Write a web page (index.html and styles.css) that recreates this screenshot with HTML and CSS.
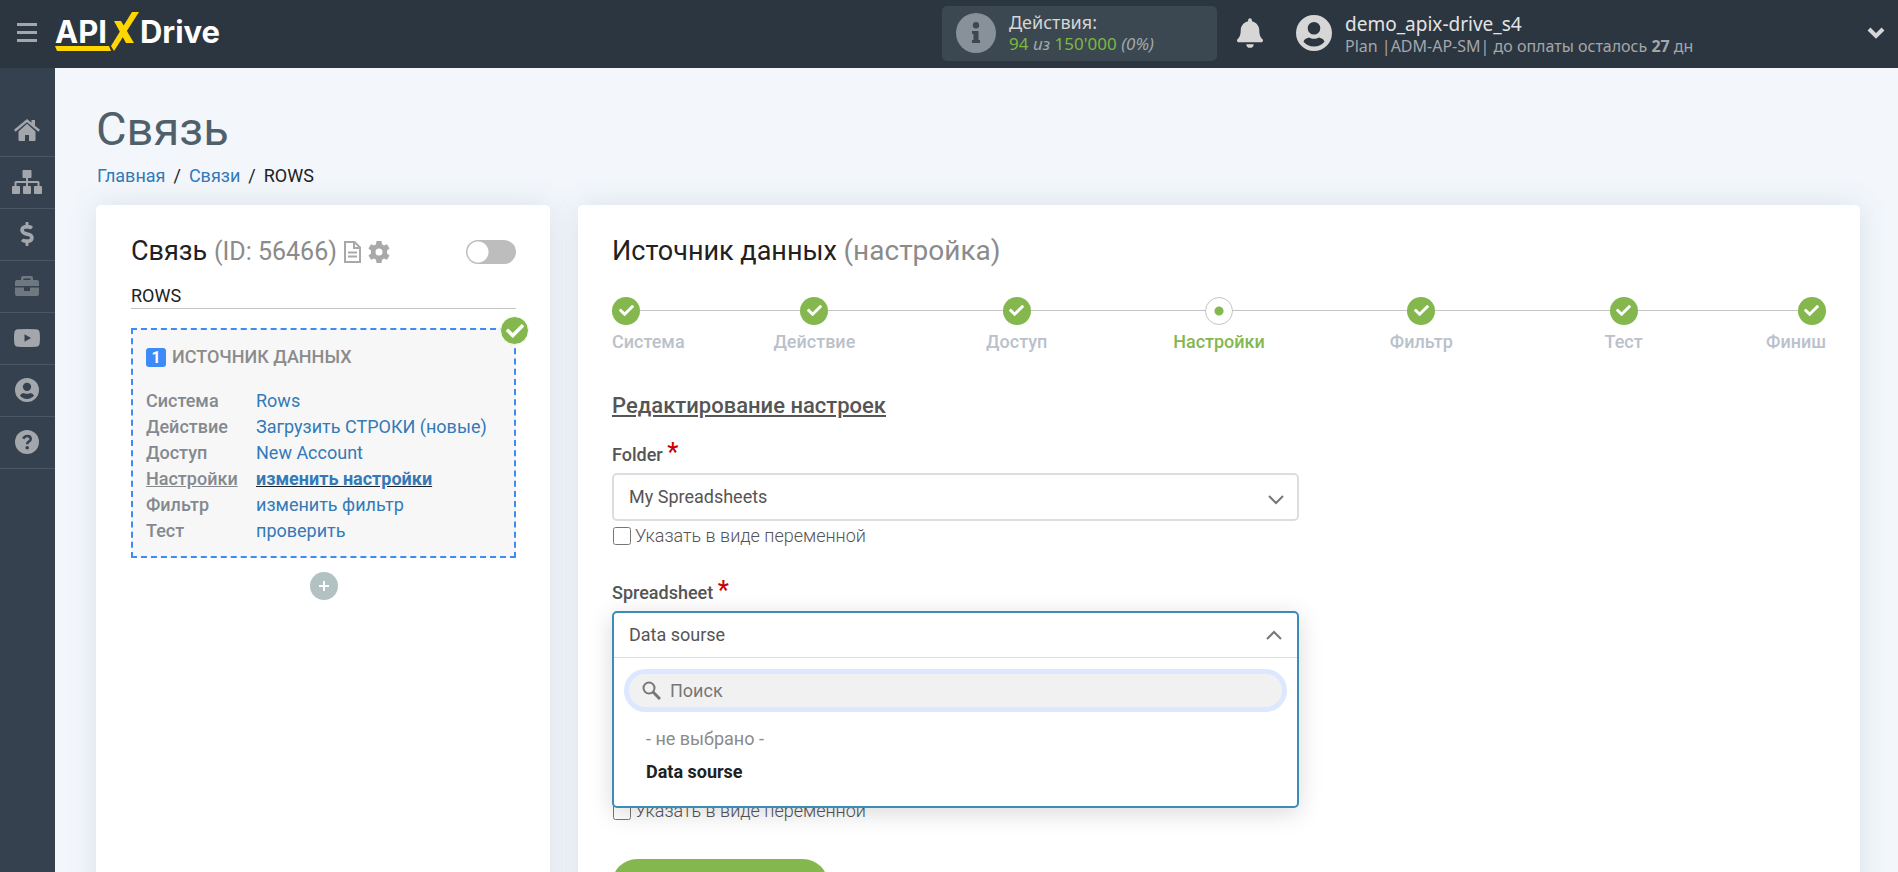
FILE: index.html
```html
<!DOCTYPE html>
<html lang="ru">
<head>
    <meta charset="UTF-8">
    <meta name="viewport" content="width=device-width, initial-scale=1.0">
    <title>Связь - ROWS</title>
    <link rel="stylesheet" href="styles.css">
</head>
<body>

    <!-- Shared icons -->
    <svg class="sprite" aria-hidden="true">
        <symbol id="icon-user" viewBox="0 0 36 36">
            <path fill-rule="evenodd" d="M18 0a18 18 0 1 1 0 36a18 18 0 1 1 0-36zM18 7a6.300 6.300 0 1 0 0 12.600a6.300 6.300 0 1 0 0-12.600zM13 22.500c-3 .6-5 2.300-5.500 4.300c2.500 3 6 4.700 10.500 4.700s8-1.700 10.500-4.700c-.5-2-2.500-3.700-5.500-4.300c-1.500.8-3.200 1.300-5 1.300s-3.500-.5-5-1.300z"/>
        </symbol>
        <symbol id="icon-check" viewBox="0 0 512 512">
            <path d="M173.898 439.404l-166.400-166.400c-9.997-9.997-9.997-26.206 0-36.204l36.203-36.204c9.997-9.998 26.207-9.998 36.204 0L192 312.690 432.095 72.596c9.997-9.997 26.207-9.997 36.204 0l36.203 36.204c9.997 9.997 9.997 26.206 0 36.204l-294.400 294.401c-9.998 9.997-26.207 9.997-36.204-.001z"/>
        </symbol>
    </svg>

    <header class="header">
        <button class="menu-btn" type="button" aria-label="Меню">
            <svg width="20" height="19" viewBox="0 0 20 19"><path d="M0 0h20v3H0zM0 8h20v3H0zM0 16h20v3H0z"/></svg>
        </button>
        <a class="logo" href="#">
            <span>API</span>
            <svg class="logo-x" width="32" height="40" viewBox="0 0 32 40">
                <path d="M24 0h7L6 39l-3-5z"/>
                <path d="M6 9h7l13 22h-8z"/>
            </svg>
            <span>Drive</span>
            <svg class="logo-line" width="57" height="5" viewBox="0 0 57 5"><path d="M0 0h54l2 5H2z"/></svg>
        </a>

        <div class="actions">
            <svg width="40" height="40" viewBox="0 0 40 40">
                <circle cx="20" cy="20" r="20" fill="#88919a"/>
                <path d="M20 9a3.200 3.200 0 1 1 0 6.400a3.200 3.200 0 1 1 0-6.400zM16 18h6.500v9H24v3h-8v-3h1.500v-6H16z" fill="#3b4851"/>
            </svg>
            <div>
                <div class="actions-title">Действия:</div>
                <div class="actions-count"><b>94</b> <i>из</i> <b>150'000</b> <i>(0%)</i></div>
            </div>
        </div>
        <button class="bell" type="button" aria-label="Уведомления">
            <svg width="26" height="30" viewBox="0 0 448 512"><path d="M224 512c35.320 0 63.970-28.650 63.970-64H160.030c0 35.350 28.650 64 63.970 64zm215.390-149.710c-19.320-20.760-55.470-51.990-55.470-154.290 0-77.700-54.480-139.900-127.940-155.160V32c0-17.670-14.320-32-31.980-32s-31.980 14.330-31.980 32v20.840C118.560 68.100 64.080 130.300 64.080 208c0 102.300-36.150 133.530-55.470 154.290-6 6.450-8.660 14.160-8.610 21.710.11 16.400 12.980 32 32.100 32h383.800c19.120 0 32-15.600 32.100-32 .05-7.550-2.610-15.270-8.610-21.710z"/></svg>
        </button>
        <div class="user">
            <svg width="36" height="36"><use href="#icon-user"/></svg>
            <div class="user-text">
                <div class="user-name">demo_apix-drive_s4</div>
                <div class="user-plan">Plan |ADM-AP-SM| до оплаты осталось <b>27</b> дн</div>
            </div>
        </div>
        <button class="user-toggle" type="button" aria-label="Открыть меню">
            <svg width="18" height="12" viewBox="0 0 18 12"><path d="M2 2l7 7l7-7" fill="none" stroke="#d6d6d6" stroke-width="4"/></svg>
        </button>
    </header>

    <div class="layout">
        <nav class="sidebar">
            <a href="#" aria-label="Главная">
                <svg width="26" height="22" viewBox="0 0 26 22"><path d="M13 4.800l8.500 7.600V21a1 1 0 0 1-1 1H15v-6h-4v6H5.500a1 1 0 0 1-1-1v-8.600zM0 10.800L13 0l4.500 3.700V1H21v5.700l5 4.100l-1.600 1.900L13 3.200L1.600 12.700z"/></svg>
            </a>
            <a href="#" aria-label="Связи">
                <svg width="30" height="24" viewBox="0 0 30 24"><path d="M11.500 0h7a1 1 0 0 1 1 1v6a1 1 0 0 1-1 1H16v3h10a1.500 1.500 0 0 1 1.500 1.500V16H29a1 1 0 0 1 1 1v6a1 1 0 0 1-1 1h-6a1 1 0 0 1-1-1v-6a1 1 0 0 1 1-1h2.500v-3H16v3h2a1 1 0 0 1 1 1v6a1 1 0 0 1-1 1h-6a1 1 0 0 1-1-1v-6a1 1 0 0 1 1-1h2v-3H4.500v3H7a1 1 0 0 1 1 1v6a1 1 0 0 1-1 1H1a1 1 0 0 1-1-1v-6a1 1 0 0 1 1-1h1.500v-3.500A1.500 1.500 0 0 1 4 11h10V8h-2.500a1 1 0 0 1-1-1V1a1 1 0 0 1 1-1z"/></svg>
            </a>
            <a href="#" aria-label="Оплата">
                <svg width="14" height="24" viewBox="0 0 288 512"><path d="M209.200 233.400l-108-31.600C88.700 198.200 80 186.500 80 173.500c0-16.300 13.200-29.500 29.500-29.500h66.300c12.200 0 24.200 3.700 34.200 10.500 6.100 4.100 14.300 3.100 19.500-2l34.800-34c7.100-6.900 6.100-18.400-1.800-24.500C238 74.800 207.400 64.100 176 64V16c0-8.800-7.200-16-16-16h-32c-8.800 0-16 7.200-16 16v48h-2.500C45.800 64-5.400 118.700.5 183.600c4.200 46.100 39.400 83.600 83.800 96.600l102.500 30c12.500 3.700 21.200 15.300 21.200 28.300 0 16.300-13.200 29.500-29.500 29.500h-66.300C100 368 88 364.300 78 357.500c-6.100-4.100-14.300-3.100-19.500 2l-34.800 34c-7.100 6.900-6.100 18.400 1.800 24.500 24.500 19.200 55.100 29.900 86.500 30v48c0 8.800 7.200 16 16 16h32c8.800 0 16-7.200 16-16v-48.200c46.600-.9 90.300-28.600 105.700-72.700 21.500-61.600-14.600-124.800-72.500-141.700z"/></svg>
            </a>
            <a href="#" class="muted" aria-label="Проекты">
                <svg width="24" height="20" viewBox="0 0 24 20"><path fill-rule="evenodd" d="M6 4V2a2 2 0 0 1 2-2h8a2 2 0 0 1 2 2v2h4a2 2 0 0 1 2 2v4H0V6a2 2 0 0 1 2-2zM8.500 4h7V2.500h-7zM0 11.500h9V15h6v-3.500h9V18a2 2 0 0 1-2 2H2a2 2 0 0 1-2-2z"/></svg>
            </a>
            <a href="#" aria-label="Видео">
                <svg width="26" height="18" viewBox="0 0 26 18"><path fill-rule="evenodd" d="M4 .3Q13-.3 22 .3Q25.500.5 25.700 4Q26.200 9 25.700 14Q25.500 17.500 22 17.700Q13 18.300 4 17.700Q.5 17.500.3 14Q-.3 9 .3 4Q.5.5 4 .3zM10.500 5.300v7.400l6.500-3.700z"/></svg>
            </a>
            <a href="#" aria-label="Профиль">
                <svg width="24" height="24"><use href="#icon-user"/></svg>
            </a>
            <a href="#" aria-label="Помощь">
                <svg width="24" height="24" viewBox="0 0 24 24"><circle cx="12" cy="12" r="12"/><path d="M8.300 8.800Q9.500 6 12.200 6Q15.700 6 15.700 9Q15.700 10.700 13.800 11.700Q12.200 12.500 12.200 14.300" fill="none" stroke="#36414f" stroke-width="2.600"/><circle cx="12.200" cy="17.800" r="1.800" fill="#36414f"/></svg>
            </a>
        </nav>

        <main class="main">
            <h1>Связь</h1>
            <nav class="breadcrumbs">
                <a href="#">Главная</a><span>/</span><a href="#">Связи</a><span>/</span>ROWS
            </nav>

            <div class="cards">
                <section class="card card-link">
                    <div class="link-head">
                        <h2>Связь <small>(ID: 56466)</small></h2>
                        <button class="icon-btn" type="button" aria-label="Журнал">
                            <svg width="17" height="22" viewBox="0 0 17 22" fill="none" stroke="#a9a9a9" stroke-width="2"><path d="M1 1h9.500L16 6.500V21H1zM10 1v6h6M4 11.500h9M4 15.500h9"/></svg>
                        </button>
                        <button class="icon-btn" type="button" aria-label="Настройки связи">
                            <svg width="22" height="22" viewBox="0 0 22 22" fill="#a9a9a9"><path fill-rule="evenodd" d="M8.500 0h5l.5 3.200l2 1.200l3-1.200l2.500 4.300L19 9.600v2.800l2.500 2.100l-2.500 4.300l-3-1.200l-2 1.200l-.5 3.200h-5L8 18.800l-2-1.200l-3 1.200L.5 14.500L3 12.400V9.600L.5 7.500L3 3.200l3 1.200l2-1.200zM11 7.500a3.500 3.500 0 1 0 0 7a3.500 3.500 0 1 0 0-7z"/></svg>
                        </button>
                        <input class="switch" type="checkbox" aria-label="Включить связь">
                    </div>
                    <input class="link-name" type="text" value="ROWS" aria-label="Название связи">

                    <div class="source">
                        <span class="source-done"><svg width="18" height="18"><use href="#icon-check"/></svg></span>
                        <h3><span class="num">1</span>ИСТОЧНИК ДАННЫХ</h3>
                        <dl>
                            <dt>Система</dt><dd><a href="#">Rows</a></dd>
                            <dt>Действие</dt><dd><a href="#">Загрузить СТРОКИ (новые)</a></dd>
                            <dt>Доступ</dt><dd><a href="#">New Account</a></dd>
                            <dt class="current">Настройки</dt><dd class="current"><a href="#">изменить настройки</a></dd>
                            <dt>Фильтр</dt><dd><a href="#">изменить фильтр</a></dd>
                            <dt>Тест</dt><dd><a href="#">проверить</a></dd>
                        </dl>
                    </div>
                    <button class="add" type="button" aria-label="Добавить">
                        <svg width="10" height="10" viewBox="0 0 10 10"><path d="M5 0v10M0 5h10" stroke="#fff" stroke-width="2"/></svg>
                    </button>
                </section>

                <section class="card card-setup">
                    <h2>Источник данных <small>(настройка)</small></h2>

                    <ol class="steps">
                        <li><i><svg width="15" height="15"><use href="#icon-check"/></svg></i>Система</li>
                        <li><i><svg width="15" height="15"><use href="#icon-check"/></svg></i>Действие</li>
                        <li><i><svg width="15" height="15"><use href="#icon-check"/></svg></i>Доступ</li>
                        <li class="active"><i></i>Настройки</li>
                        <li><i><svg width="15" height="15"><use href="#icon-check"/></svg></i>Фильтр</li>
                        <li><i><svg width="15" height="15"><use href="#icon-check"/></svg></i>Тест</li>
                        <li><i><svg width="15" height="15"><use href="#icon-check"/></svg></i>Финиш</li>
                    </ol>

                    <form class="form">
                        <h3>Редактирование настроек</h3>

                        <div class="field">
                            <label class="field-label" for="folder">Folder <em>*</em></label>
                            <div class="select">
                                <select id="folder">
                                    <option>My Spreadsheets</option>
                                </select>
                                <svg class="arrow" width="16" height="10" viewBox="0 0 16 10"><path d="M1 1l7 7l7-7"/></svg>
                            </div>
                            <label class="variable"><input type="checkbox">Указать в виде переменной</label>
                        </div>

                        <div class="field">
                            <label class="field-label" for="spreadsheet">Spreadsheet <em>*</em></label>
                            <div class="dropdown">
                                <button class="dropdown-value" id="spreadsheet" type="button" aria-expanded="true">
                                    Data sourse
                                    <svg class="arrow" width="16" height="10" viewBox="0 0 16 10"><path d="M1 9l7-7l7 7"/></svg>
                                </button>
                                <div class="search">
                                    <svg width="19" height="19" viewBox="0 0 19 19" fill="none" stroke="#777" stroke-width="2"><circle cx="7" cy="7" r="5.500"/><path d="M11 11l7 7" stroke-width="3"/></svg>
                                    <input type="text" placeholder="Поиск" aria-label="Поиск">
                                </div>
                                <ul role="listbox">
                                    <li role="option">- не выбрано -</li>
                                    <li role="option" class="selected" aria-selected="true">Data sourse</li>
                                </ul>
                            </div>
                            <label class="variable"><input type="checkbox">Указать в виде переменной</label>
                        </div>

                        <button class="submit" type="button" aria-label="Продолжить"></button>
                    </form>
                </section>
            </div>
        </main>
    </div>

</body>
</html>
```
FILE: styles.css
```css
* {
    box-sizing: border-box;
}

body {
    margin: 0;
    height: 100vh;
    display: flex;
    flex-direction: column;
    overflow: hidden;
    background: #f3f7fc;
    color: #212121;
    font-family: Roboto, "Liberation Sans", sans-serif;
    font-size: 18px;
    line-height: 26px;
}

h1, h2, h3, ul, ol, dl, dd {
    margin: 0;
    padding: 0;
    font-weight: 400;
    list-style: none;
}

svg {
    display: block;
    flex: none;
}

button {
    padding: 0;
    border: 0;
    background: none;
    font: inherit;
    color: inherit;
    cursor: pointer;
}

a {
    color: #337ab7;
    text-decoration: none;
}

.sprite {
    display: none;
}

/* Header */
.header {
    flex: none;
    display: flex;
    align-items: center;
    height: 68px;
    padding: 0 13px 2px 17px;
    background: #2c3641;
    font-family: "Noto Sans", "Open Sans", sans-serif;
}

.menu-btn {
    margin-right: 18px;
    padding-bottom: 2px;
    fill: #a3a7ab;
}

.logo {
    position: relative;
    display: flex;
    align-items: center;
    height: 44px;
    margin-right: auto;
    padding-bottom: 2px;
    color: #fff;
    font-family: Inter, Lato, sans-serif;
    font-size: 31px;
    font-weight: 700;
}

.logo svg {
    fill: #ffd600;
}

.logo-x {
    margin-left: 1px;
}

.logo-line {
    position: absolute;
    left: 0;
    bottom: 4px;
}

.actions {
    display: flex;
    align-items: center;
    gap: 13px;
    width: 275px;
    height: 55px;
    padding-left: 14px;
    border-radius: 5px;
    background: #3b4851;
    line-height: 22px;
}

.actions-title {
    color: #d6d6d6;
}

.actions-count {
    font-size: 17px;
    color: #a3a7ab;
}

.actions-count b {
    font-weight: 400;
    color: #7cb83f;
}

.bell {
    margin: 0 33px 0 20px;
    fill: #d6d6d6;
}

.user {
    display: flex;
    align-items: center;
    gap: 13px;
    width: 571px;
    fill: #d6d6d6;
    line-height: 22px;
    white-space: nowrap;
}

.user-text {
    padding-top: 3px;
}

.user-name {
    color: #e4e4e4;
    font-size: 19px;
}

.user-plan {
    font-size: 16px;
    color: #a3a7ab;
}

/* Sidebar */
.layout {
    flex: 1;
    display: flex;
    min-height: 0;
}

.sidebar {
    flex: none;
    width: 55px;
    padding-top: 37px;
    background: #36414f;
}

.sidebar a {
    display: flex;
    align-items: center;
    justify-content: center;
    height: 52px;
    padding: 0 1px 2px 0;
    border-bottom: 1px solid #4c5662;
    fill: #a3a7ab;
}

.sidebar .muted {
    fill: #6f7881;
}

/* Page */
.main {
    flex: 1;
    min-width: 0;
    padding: 31px 38px 0 41px;
    overflow-y: auto;
    scrollbar-width: none;
}

h1 {
    color: #4f606b;
    font-size: 47px;
    line-height: 60px;
}

.breadcrumbs {
    padding: 4px 1px 16px;
}

.breadcrumbs span {
    margin: 0 8px;
}

.cards {
    display: flex;
    gap: 28px;
}

.card {
    min-height: 800px;
    padding: 28px 34px;
    border-radius: 5px;
    background: #fff;
    box-shadow: 0 0 30px rgba(70, 90, 105, 0.14);
}

.card-link {
    flex: none;
    width: 454px;
    padding-left: 35px;
}

.card-setup {
    flex: 1;
    min-width: 0;
}

h2 {
    font-size: 27px;
    line-height: 36px;
}

h2 small {
    font-size: 28px;
    color: #8b8b8b;
}

/* Link card */
.link-head {
    display: flex;
    align-items: center;
}

.link-head small {
    font-size: 25px;
}

.icon-btn {
    margin-left: 7px;
}

.switch {
    appearance: none;
    width: 50px;
    height: 24px;
    margin: 0 0 0 auto;
    border-radius: 12px;
    background: radial-gradient(circle at 12px 12px, #fff 10px, #bdbdbd 11px);
}

.link-name {
    display: block;
    width: 100%;
    height: 26px;
    margin-top: 13px;
    padding: 0;
    border: 0;
    border-bottom: 1px solid #c4c4c4;
    background: none;
    color: #212121;
    font: inherit;
}

.source {
    position: relative;
    margin-top: 19px;
    padding: 14px 13px 12px;
    border: 2px dashed #3d8bf7;
    background: #f7f7f7;
}

.source-done {
    position: absolute;
    top: -14px;
    right: -15px;
    display: flex;
    align-items: center;
    justify-content: center;
    width: 29px;
    height: 29px;
    border: 1px solid #fff;
    border-radius: 50%;
    background: #84b84e;
    fill: #fff;
}

.source h3 {
    display: flex;
    align-items: center;
    gap: 6px;
    color: #8b8b8b;
    font-size: 18px;
    font-weight: 500;
}

.num {
    width: 20px;
    height: 19px;
    border-radius: 3px;
    background: #3d8bf7;
    color: #fff;
    font-size: 16px;
    font-weight: 700;
    line-height: 19px;
    text-align: center;
}

.source dl {
    display: grid;
    grid-template-columns: 110px 1fr;
    margin-top: 18px;
}

.source dt {
    color: #84898f;
    font-weight: 500;
}

.source .current {
    text-decoration: underline;
}

.source .current a {
    font-weight: 700;
}

.add {
    display: flex;
    align-items: center;
    justify-content: center;
    width: 28px;
    height: 28px;
    margin: 14px auto 0;
    border-radius: 50%;
    background: #b2c2c3;
}

/* Steps */
.steps {
    display: flex;
    margin-top: 28px;
    background: linear-gradient(#c4c4c4, #c4c4c4) 0 13px / 100% 1px no-repeat;
    color: #bac1ca;
    font-weight: 500;
}

.steps li {
    flex: 2;
    display: flex;
    flex-direction: column;
    align-items: center;
    gap: 4px;
}

.steps li:first-child {
    flex: 1;
    align-items: flex-start;
}

.steps li:last-child {
    flex: 1;
    align-items: flex-end;
}

.steps i {
    display: flex;
    align-items: center;
    justify-content: center;
    width: 28px;
    height: 28px;
    padding-bottom: 2px;
    border-radius: 50%;
    background: #84b84e;
    fill: #fff;
}

.steps .active {
    color: #84b84e;
}

.steps .active i {
    border: 1px solid #c4c4c4;
    background: radial-gradient(circle, #84b84e 4px, #fff 5px);
}

/* Form */
.form {
    max-width: 687px;
    margin-top: 36px;
    color: #555;
}

.form h3 {
    font-size: 22px;
    font-weight: 500;
    line-height: 30px;
    text-decoration: underline;
}

.field {
    margin-top: 19px;
}

.field + .field {
    margin-top: 29px;
}

.field-label {
    display: block;
    height: 33px;
    font-weight: 500;
}

.field-label em {
    color: #c00;
    font-size: 25px;
    font-style: normal;
    line-height: 26px;
}

.select {
    position: relative;
}

.select select {
    appearance: none;
    width: 100%;
    height: 48px;
    padding: 0 15px;
    border: 2px solid #ddd;
    border-radius: 5px;
    background: #fff;
    color: #555;
    font: inherit;
}

.arrow {
    fill: none;
    stroke: #777;
    stroke-width: 2;
}

.select .arrow {
    position: absolute;
    top: 22px;
    right: 15px;
}

.variable {
    display: flex;
    align-items: center;
    gap: 4px;
    margin-top: 2px;
    font-weight: 300;
}

.variable input {
    width: 18px;
    height: 18px;
    margin: 0 0 0 1px;
}

.dropdown {
    position: relative;
    z-index: 1;
    margin-bottom: -12px;
    padding-bottom: 18px;
    border: 2px solid #3a8dba;
    border-radius: 5px;
    background: #fff;
    box-shadow: 0 5px 25px rgba(0, 0, 0, 0.15);
}

.dropdown-value {
    display: flex;
    align-items: center;
    justify-content: space-between;
    width: 100%;
    height: 45px;
    padding: 0 15px;
    border-bottom: 1px solid #ddd;
}

.search {
    display: flex;
    align-items: center;
    gap: 9px;
    height: 43px;
    margin: 11px 10px 10px;
    padding: 0 13px;
    border: 5px solid #dbe8ff;
    border-radius: 22px;
    background: #f1f1f1;
}

.search input {
    flex: 1;
    padding: 0;
    border: 0;
    outline: 0;
    background: none;
    font: inherit;
}

.search input::placeholder {
    color: #777;
}

.dropdown li {
    padding: 3px 32px;
    line-height: 27px;
    color: #8b8b8b;
}

.dropdown .selected {
    color: #212121;
    font-weight: 700;
}

.submit {
    width: 216px;
    height: 50px;
    margin-top: 35px;
    border-radius: 25px;
    background: #84b84e;
}
```
